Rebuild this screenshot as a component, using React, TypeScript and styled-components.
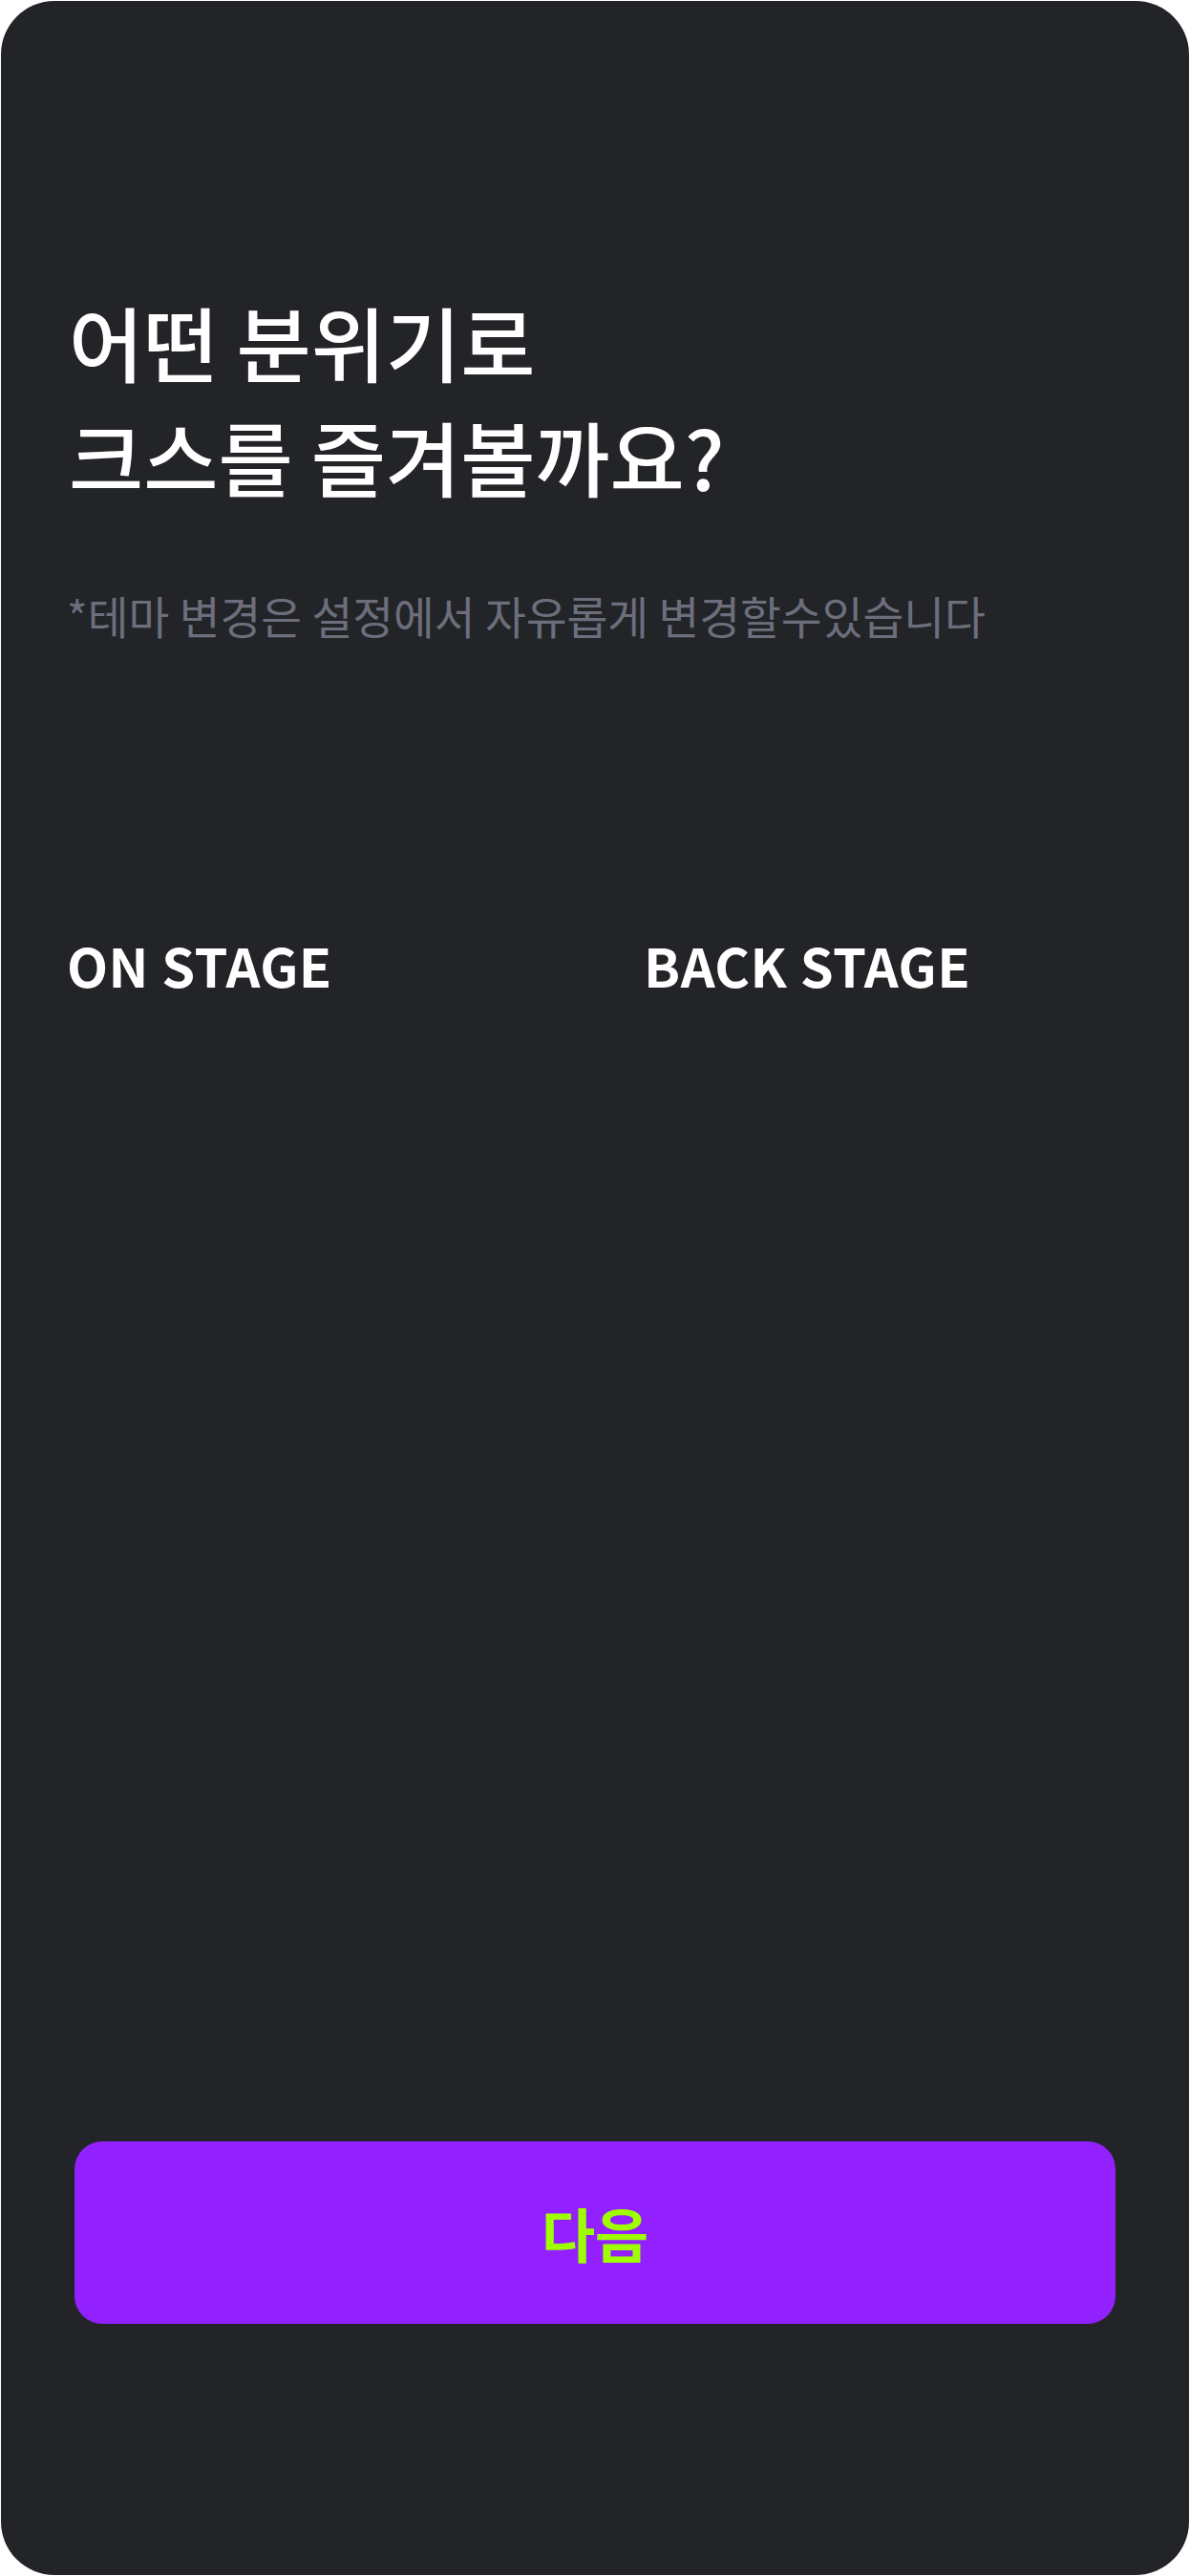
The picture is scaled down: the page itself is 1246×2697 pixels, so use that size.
import React from "react";
import styled, { createGlobalStyle } from "styled-components";

const GlobalStyle = createGlobalStyle`
  html, body {
    margin: 0;
    padding: 0;
    background: #ffffff;
  }
  body {
    font-family: "Noto Sans CJK KR", "Noto Sans", sans-serif;
  }
  #root {
    padding: 1px;
  }
  * { box-sizing: border-box; }
`;

const Screen = styled.div`
  width: 1244px;
  height: 2695px;
  background: #232428;
  border-radius: 56px;
  display: flex;
  flex-direction: column;
  padding: 296px 68px 263px 69px;
  overflow: hidden;
`;

const Title = styled.h1`
  margin: 0 0 0 2px;
  font-family: "Noto Sans CJK KR", sans-serif;
  font-size: 85px;
  font-weight: 500;
  line-height: 120px;
  color: #ffffff;
  letter-spacing: 0;
`;

const Hint = styled.p`
  margin: 75px 0 0 0;
  font-family: "Noto Sans CJK KR", sans-serif;
  font-size: 46.5px;
  font-weight: 400;
  line-height: 64px;
  color: #6c6f7b;
`;

const ThemeGrid = styled.div`
  display: grid;
  grid-template-columns: 504px 504px;
  column-gap: 100px;
  margin-top: 296px;
`;

const ThemeOption = styled.div`
  display: flex;
  flex-direction: column;
`;

const ThemeLabel = styled.span`
  font-family: "Noto Sans CJK KR", sans-serif;
  font-size: 56px;
  font-weight: 700;
  line-height: 75px;
  letter-spacing: 0.5px;
  color: #ffffff;
`;

const NextButton = styled.button`
  margin-top: auto;
  margin-left: 8px;
  width: 1090px;
  height: 191px;
  border: none;
  border-radius: 29px;
  background: #9220ff;
  color: #9eff00;
  font-family: "Noto Sans CJK KR", sans-serif;
  font-size: 61px;
  font-weight: 700;
  display: flex;
  align-items: center;
  justify-content: center;
  cursor: pointer;
  padding: 0;
`;

const themes = ["ON STAGE", "BACK STAGE"];

export default function App() {
  return (
    <>
      <GlobalStyle />
      <Screen>
        <Title>
          어떤 분위기로
          <br />
          크스를 즐겨볼까요?
        </Title>
        <Hint>*테마 변경은 설정에서 자유롭게 변경할수있습니다</Hint>
        <ThemeGrid>
          {themes.map((t) => (
            <ThemeOption key={t}>
              <ThemeLabel>{t}</ThemeLabel>
            </ThemeOption>
          ))}
        </ThemeGrid>
        <NextButton>다음</NextButton>
      </Screen>
    </>
  );
}
